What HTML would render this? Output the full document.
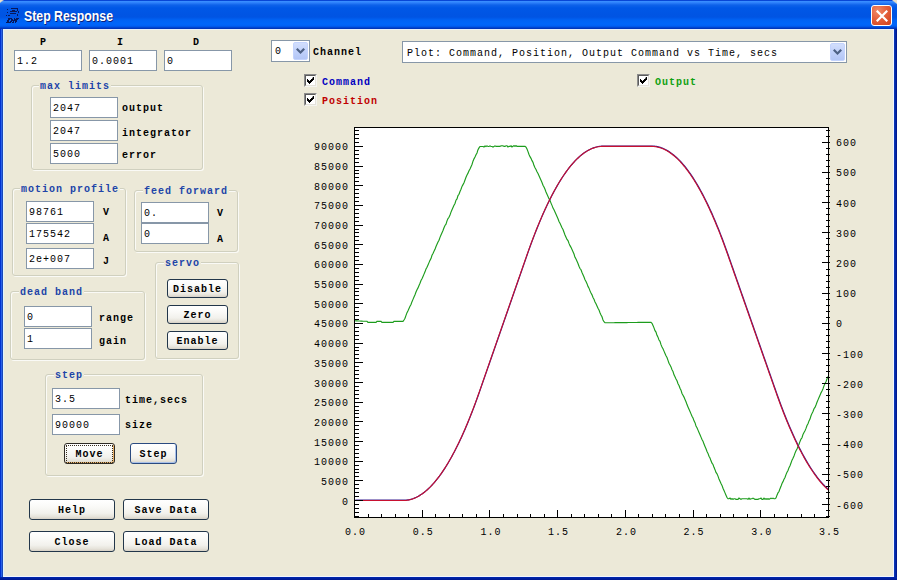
<!DOCTYPE html>
<html><head><meta charset="utf-8">
<style>
*{margin:0;padding:0;box-sizing:border-box}
html,body{width:897px;height:580px;overflow:hidden;background:#ECE9D8}
body{position:relative;font-family:"Liberation Mono",monospace;font-size:10px;letter-spacing:1px;color:#000}
.a{position:absolute}
#title{position:absolute;left:0;top:0;width:897px;height:29px;
 background:linear-gradient(to bottom,#0846D6 0px,#0846D6 1px,#3B8FFF 1px,#3489FF 2px,#2A7CF8 3px,#0E62EA 5px,#0057E6 8px,#0054E3 17px,#0062F4 20px,#0066FA 24px,#0060F4 26px,#0050E0 27px,#003CC4 28px,#0030B0 29px);}
#ttext{position:absolute;left:24px;top:8px;font-family:"Liberation Sans",sans-serif;font-weight:bold;font-size:14px;line-height:16px;letter-spacing:0;color:#fff;text-shadow:1px 1px 0 #0A1F7A;transform:scaleX(0.88);transform-origin:0 0;white-space:pre}
#lb{position:absolute;left:0;top:29px;width:3px;height:551px;background:linear-gradient(to right,#0032D0 0,#0032D0 1px,#2860E8 1px,#2860E8 2px,#1A48B8 2px,#1A48B8 3px)}
#rb{position:absolute;left:894px;top:29px;width:3px;height:551px;background:linear-gradient(to right,#0A34B4 0,#0A34B4 1px,#0028A8 1px,#0028A8 2px,#001890 2px,#001890 3px)}
#bb{position:absolute;left:0;top:577px;width:897px;height:3px;background:linear-gradient(to bottom,#0028B0,#001C98 2px,#001890 3px)}
#content{position:absolute;left:3px;top:29px;width:891px;height:548px;background:#ECE9D8;border-top:1px solid #E8F0F8;border-left:1px solid #E0F4FF;border-right:1px solid #F0F4FF;border-bottom:1px solid #F0F4FF}
.tb{position:absolute;background:#fff;border:1px solid #8797A8;height:21px;width:68px;padding-left:2px;line-height:21px;white-space:pre}
.lbl{position:absolute;font-weight:bold;white-space:pre;line-height:18px}
.grp{position:absolute;border:1px solid #D0D0BF;border-radius:3px;box-shadow:1px 1px 0 #FAFAF6, inset 1px 1px 0 #FAFAF6}
.gt{position:absolute;font-weight:bold;color:#2044A8;background:#ECE9D8;padding:0 1px;line-height:16px;white-space:pre}
.btn{position:absolute;border:1px solid #22364A;border-radius:3px;font-weight:bold;text-align:center;line-height:19px;white-space:pre;
 background:linear-gradient(to bottom,#FFFFFF 0%,#FBFBF9 30%,#F2F1EC 70%,#E6E3DA 88%,#D6D0C5 100%)}
.yl{position:absolute;left:299px;width:50px;text-align:right;line-height:14px}
.yr{position:absolute;left:836px;line-height:14px;white-space:pre}
.xl{position:absolute;top:526px;width:60px;text-align:center;line-height:14px}
.chart{position:absolute;left:0;top:0}
.cb{position:absolute;width:13px;height:13px;background:#fff;border-top:1px solid #8C8C8C;border-left:1px solid #8C8C8C;border-right:1px solid #F4F4F0;border-bottom:1px solid #F4F4F0;}
.cb:before{content:"";position:absolute;left:0;top:0;right:0;bottom:0;border-top:1px solid #5C5C5C;border-left:1px solid #5C5C5C;border-right:1px solid #E4E2DA;border-bottom:1px solid #E4E2DA}
.cb svg{position:absolute;left:2px;top:2px}
.combo{position:absolute;background:#fff;border:1px solid #8797A8;white-space:pre;line-height:24px;padding-left:4px}
.dd{position:absolute;top:1px;right:1px;width:15px;bottom:1px;border-radius:2px;border:1px solid #C3D3FD;
 background:linear-gradient(to bottom,#D2DEFC,#C1D1FA 50%,#B3C6F6)}
.dd svg{position:absolute;left:2px;top:5px}
</style></head><body>
<div id="title"></div>
<svg class="a" style="left:0;top:0" width="24" height="26"><g fill="#08185A"><rect x="11" y="8" width="7" height="1"/><rect x="7" y="9" width="1" height="1"/><rect x="17" y="9" width="1" height="1"/><rect x="12" y="10" width="3" height="1"/><rect x="17" y="10" width="1" height="1"/><rect x="10" y="11" width="7" height="1"/><rect x="18" y="11" width="1" height="1"/><rect x="7" y="12" width="1" height="1"/><rect x="18" y="12" width="1" height="1"/><rect x="10" y="13" width="6" height="1"/><rect x="17" y="14" width="1" height="1"/><rect x="6" y="15" width="1" height="1"/><rect x="8" y="15" width="2" height="1"/><rect x="17" y="15" width="1" height="1"/><rect x="8" y="18" width="4" height="1"/><rect x="14" y="18" width="1" height="1"/><rect x="16" y="18" width="3" height="1"/><rect x="8" y="19" width="2" height="1"/><rect x="11" y="19" width="2" height="1"/><rect x="14" y="19" width="2" height="1"/><rect x="16" y="19" width="2" height="1"/><rect x="7" y="20" width="2" height="1"/><rect x="11" y="20" width="2" height="1"/><rect x="13" y="20" width="4" height="1"/><rect x="7" y="21" width="2" height="1"/><rect x="10" y="21" width="2" height="1"/><rect x="13" y="21" width="1" height="1"/><rect x="15" y="21" width="2" height="1"/><rect x="6" y="22" width="5" height="1"/><rect x="12" y="22" width="2" height="1"/><rect x="15" y="22" width="1" height="1"/></g></svg>
<div id="ttext">Step Response</div>
<div class="a" style="left:871px;top:5px;width:21px;height:21px;border:1px solid #fff;border-radius:3px;background:radial-gradient(circle at 30% 25%,#F08A68 0%,#E4603C 45%,#D0401C 100%)">
 <svg class="a" style="left:4px;top:4px" width="12" height="12" viewBox="0 0 12 12"><path d="M1.5 1.5L10.5 10.5M10.5 1.5L1.5 10.5" stroke="#fff" stroke-width="2.2" stroke-linecap="square"/></svg>
</div>
<div class="a" style="left:892px;top:0;width:5px;height:4px;background:linear-gradient(to bottom left,#ECE0C8 40%,rgba(0,80,230,0) 60%)"></div>
<div class="a" style="left:0;top:0;width:4px;height:3px;background:linear-gradient(to bottom right,#ECE0C8 35%,rgba(0,80,230,0) 60%)"></div>
<div id="lb"></div><div id="rb"></div><div id="bb"></div>
<div id="content"></div>

<!-- PID -->
<div class="lbl" style="left:40px;top:34px">P</div>
<div class="lbl" style="left:117px;top:34px">I</div>
<div class="lbl" style="left:193px;top:34px">D</div>
<div class="tb" style="left:14px;top:50px">1.2</div>
<div class="tb" style="left:89px;top:50px">0.0001</div>
<div class="tb" style="left:164px;top:50px">0</div>

<!-- max limits -->
<div class="grp" style="left:31px;top:85px;width:172px;height:85px"></div>
<div class="gt" style="left:39px;top:79px">max limits</div>
<div class="tb" style="left:50px;top:97px">2047</div>
<div class="tb" style="left:50px;top:120px">2047</div>
<div class="tb" style="left:50px;top:143px">5000</div>
<div class="lbl" style="left:122px;top:100px">output</div>
<div class="lbl" style="left:122px;top:125px">integrator</div>
<div class="lbl" style="left:122px;top:147px">error</div>

<!-- motion profile -->
<div class="grp" style="left:12px;top:188px;width:114px;height:88px"></div>
<div class="gt" style="left:20px;top:182px">motion profile</div>
<div class="tb" style="left:26px;top:201px">98761</div>
<div class="tb" style="left:26px;top:223px">175542</div>
<div class="tb" style="left:26px;top:248px">2e+007</div>
<div class="lbl" style="left:103px;top:204px">V</div>
<div class="lbl" style="left:103px;top:230px">A</div>
<div class="lbl" style="left:103px;top:253px">J</div>

<!-- feed forward -->
<div class="grp" style="left:134px;top:190px;width:104px;height:62px"></div>
<div class="gt" style="left:143px;top:184px">feed forward</div>
<div class="tb" style="left:141px;top:202px">0.</div>
<div class="tb" style="left:141px;top:223px">0</div>
<div class="lbl" style="left:217px;top:205px">V</div>
<div class="lbl" style="left:217px;top:231px">A</div>

<!-- servo -->
<div class="grp" style="left:155px;top:262px;width:84px;height:97px"></div>
<div class="gt" style="left:164px;top:256px">servo</div>
<div class="btn" style="left:167px;top:279px;width:61px;height:19px">Disable</div>
<div class="btn" style="left:167px;top:305px;width:61px;height:19px">Zero</div>
<div class="btn" style="left:167px;top:331px;width:61px;height:19px">Enable</div>

<!-- dead band -->
<div class="grp" style="left:10px;top:291px;width:135px;height:69px"></div>
<div class="gt" style="left:19px;top:285px">dead band</div>
<div class="tb" style="left:24px;top:306px">0</div>
<div class="tb" style="left:24px;top:328px">1</div>
<div class="lbl" style="left:99px;top:310px">range</div>
<div class="lbl" style="left:99px;top:333px">gain</div>

<!-- step -->
<div class="grp" style="left:45px;top:374px;width:158px;height:102px"></div>
<div class="gt" style="left:54px;top:368px">step</div>
<div class="tb" style="left:52px;top:388px">3.5</div>
<div class="tb" style="left:52px;top:414px">90000</div>
<div class="lbl" style="left:125px;top:392px">time,secs</div>
<div class="lbl" style="left:125px;top:417px">size</div>
<div class="btn" style="left:64px;top:443px;width:51px;height:21px;line-height:21px;border-color:#2E2A24;box-shadow:inset -1px -1px 0 #E8B068">Move</div>
<div class="a" style="left:66px;top:445px;width:47px;height:18px;border:1px dotted #3A3020"></div>
<div class="btn" style="left:130px;top:443px;width:47px;height:21px;line-height:21px;border-color:#2A4A80;box-shadow:inset -1px -1px 0 #A8C0E8">Step</div>

<!-- bottom buttons -->
<div class="btn" style="left:29px;top:499px;width:86px;height:21px;line-height:21px">Help</div>
<div class="btn" style="left:123px;top:499px;width:86px;height:21px;line-height:21px">Save Data</div>
<div class="btn" style="left:29px;top:531px;width:86px;height:21px;line-height:21px">Close</div>
<div class="btn" style="left:123px;top:531px;width:86px;height:21px;line-height:21px">Load Data</div>

<!-- channel combo -->
<div class="combo" style="left:271px;top:40px;width:39px;height:22px;padding-left:3px;line-height:22px">0<div class="dd"><svg width="9" height="7" viewBox="0 0 9 7"><path d="M0 1.6L1.6 0L4.5 2.9L7.4 0L9 1.6L4.5 6.1Z" fill="#4D6185"/></svg></div></div>
<div class="lbl" style="left:313px;top:44px">Channel</div>

<div class="combo" style="left:402px;top:41px;width:445px;height:22px">Plot: Command, Position, Output Command vs Time, secs<div class="dd"><svg width="9" height="7" viewBox="0 0 9 7"><path d="M0 1.6L1.6 0L4.5 2.9L7.4 0L9 1.6L4.5 6.1Z" fill="#4D6185"/></svg></div></div>

<!-- checkboxes -->
<div class="cb" style="left:304px;top:74px"><svg width="7" height="7" viewBox="0 0 7 7"><path fill="#000" d="M6 0h1v3h-1v1h-1v1h-1v1h-1v1h-1v-1h-1v-1h-1v-3h1v1h1v1h1v-1h1v-1h1z"/></svg></div>
<div class="lbl" style="left:322px;top:74px;color:#0000C0">Command</div>
<div class="cb" style="left:304px;top:93px"><svg width="7" height="7" viewBox="0 0 7 7"><path fill="#000" d="M6 0h1v3h-1v1h-1v1h-1v1h-1v1h-1v-1h-1v-1h-1v-3h1v1h1v1h1v-1h1v-1h1z"/></svg></div>
<div class="lbl" style="left:322px;top:93px;color:#C00000">Position</div>
<div class="cb" style="left:637px;top:74px"><svg width="7" height="7" viewBox="0 0 7 7"><path fill="#000" d="M6 0h1v3h-1v1h-1v1h-1v1h-1v1h-1v-1h-1v-1h-1v-3h1v1h1v1h1v-1h1v-1h1z"/></svg></div>
<div class="lbl" style="left:655px;top:74px;color:#10A010">Output</div>

<svg class="chart" width="897" height="580"><rect x="354" y="127" width="475" height="391" fill="#fff"/><polyline points="355.0,320.80 356.0,320.85 357.0,320.90 358.0,320.95 359.0,321.00 360.0,321.05 361.0,321.10 362.0,321.15 363.0,321.20 364.0,321.22 365.0,321.24 366.0,321.27 367.0,321.29 368.0,322.40 369.0,322.40 370.0,322.40 371.0,322.40 372.0,322.40 373.0,322.40 374.0,322.40 375.0,322.40 376.0,322.40 377.0,321.30 378.0,321.30 379.0,321.30 380.0,321.30 381.0,321.30 382.0,322.40 383.0,322.40 384.0,322.40 385.0,322.40 386.0,322.40 387.0,322.40 388.0,322.40 389.0,322.40 390.0,322.40 391.0,322.40 392.0,322.40 393.0,322.40 394.0,321.31 395.0,321.32 396.0,321.33 397.0,321.34 398.0,321.35 399.0,321.36 400.0,321.37 401.0,321.38 402.0,321.39 403.0,321.40 404.0,320.02 405.0,318.23 406.0,315.43 407.0,312.64 408.0,310.84 409.0,308.55 410.0,306.25 411.0,304.46 412.0,301.66 413.0,299.37 414.0,297.07 415.0,294.77 416.0,291.98 417.0,289.68 418.0,287.89 419.0,285.59 420.0,283.30 421.0,280.50 422.0,278.71 423.0,276.41 424.0,274.12 425.0,271.82 426.0,269.03 427.0,267.23 428.0,264.94 429.0,262.64 430.0,260.35 431.0,258.55 432.0,255.26 433.0,253.46 434.0,251.16 435.0,249.37 436.0,246.57 437.0,244.28 438.0,241.98 439.0,240.19 440.0,237.39 441.0,235.10 442.0,232.80 443.0,230.51 444.0,227.71 445.0,225.42 446.0,224.12 447.0,220.83 448.0,218.53 449.0,217.24 450.0,214.94 451.0,212.14 452.0,209.85 453.0,207.55 454.0,205.26 455.0,203.46 456.0,200.17 457.0,198.87 458.0,195.58 459.0,194.28 460.0,191.49 461.0,189.19 462.0,186.40 463.0,184.60 464.0,182.81 465.0,180.01 466.0,177.22 467.0,174.92 468.0,173.13 469.0,170.83 470.0,169.03 471.0,166.74 472.0,164.44 473.0,161.15 474.0,158.85 475.0,157.06 476.0,154.76 477.0,152.97 478.0,149.67 479.0,147.88 480.0,146.50 481.0,146.49 482.0,146.49 483.0,146.49 484.0,147.08 485.0,145.88 486.0,146.47 487.0,145.87 488.0,146.46 489.0,146.46 490.0,145.85 491.0,146.45 492.0,146.45 493.0,147.04 494.0,146.44 495.0,145.83 496.0,146.43 497.0,146.42 498.0,146.42 499.0,146.42 500.0,146.41 501.0,145.81 502.0,145.80 503.0,145.80 504.0,146.39 505.0,146.39 506.0,145.79 507.0,145.78 508.0,146.98 509.0,146.37 510.0,146.37 511.0,145.76 512.0,146.96 513.0,146.35 514.0,145.75 515.0,146.35 516.0,145.74 517.0,146.34 518.0,146.33 519.0,146.33 520.0,146.32 521.0,146.32 522.0,146.32 523.0,146.31 524.0,146.31 525.0,146.30 526.0,147.19 527.0,148.93 528.0,151.67 529.0,154.41 530.0,156.64 531.0,158.38 532.0,160.62 533.0,162.35 534.0,165.59 535.0,167.83 536.0,169.56 537.0,171.80 538.0,173.54 539.0,175.78 540.0,178.01 541.0,180.25 542.0,182.49 543.0,185.22 544.0,186.96 545.0,189.20 546.0,191.93 547.0,194.17 548.0,196.41 549.0,198.65 550.0,200.38 551.0,203.12 552.0,205.36 553.0,208.09 554.0,209.83 555.0,212.07 556.0,214.31 557.0,216.54 558.0,218.78 559.0,221.52 560.0,223.25 561.0,225.49 562.0,227.73 563.0,229.46 564.0,232.20 565.0,234.94 566.0,237.18 567.0,239.41 568.0,240.65 569.0,243.39 570.0,245.62 571.0,247.36 572.0,249.60 573.0,251.83 574.0,254.07 575.0,257.31 576.0,259.05 577.0,261.28 578.0,263.52 579.0,266.26 580.0,268.49 581.0,269.73 582.0,272.47 583.0,274.70 584.0,276.94 585.0,279.68 586.0,281.42 587.0,283.65 588.0,286.39 589.0,288.13 590.0,290.86 591.0,293.10 592.0,294.84 593.0,297.57 594.0,299.31 595.0,302.05 596.0,303.79 597.0,306.02 598.0,308.26 599.0,310.00 600.0,312.73 601.0,314.97 602.0,316.71 603.0,319.94 604.0,321.68 605.0,322.79 606.0,322.78 607.0,322.77 608.0,322.76 609.0,322.75 610.0,322.74 611.0,322.73 612.0,322.72 613.0,322.71 614.0,322.70 615.0,322.69 616.0,322.68 617.0,322.67 618.0,322.66 619.0,322.65 620.0,322.64 621.0,322.62 622.0,322.61 623.0,322.60 624.0,322.59 625.0,322.58 626.0,322.57 627.0,322.56 628.0,322.55 629.0,322.54 630.0,322.53 631.0,322.52 632.0,322.51 633.0,322.50 634.0,322.49 635.0,322.48 636.0,322.47 637.0,322.45 638.0,322.44 639.0,322.43 640.0,322.42 641.0,322.41 642.0,322.40 643.0,322.39 644.0,322.38 645.0,322.37 646.0,322.36 647.0,322.35 648.0,322.34 649.0,322.33 650.0,322.32 651.0,322.31 652.0,323.23 653.0,325.55 654.0,327.88 655.0,330.70 656.0,332.03 657.0,335.35 658.0,337.17 659.0,340.00 660.0,341.32 661.0,344.65 662.0,346.97 663.0,348.79 664.0,351.12 665.0,353.44 666.0,355.77 667.0,357.59 668.0,360.42 669.0,363.24 670.0,365.06 671.0,366.89 672.0,369.71 673.0,371.54 674.0,374.86 675.0,376.68 676.0,379.01 677.0,380.83 678.0,383.66 679.0,385.48 680.0,388.30 681.0,390.13 682.0,393.45 683.0,395.28 684.0,397.10 685.0,399.43 686.0,401.75 687.0,404.57 688.0,406.90 689.0,409.22 690.0,411.55 691.0,413.87 692.0,416.19 693.0,418.02 694.0,420.84 695.0,422.67 696.0,425.99 697.0,427.81 698.0,430.14 699.0,432.46 700.0,434.79 701.0,437.11 702.0,439.44 703.0,441.26 704.0,444.08 705.0,446.41 706.0,448.73 707.0,451.56 708.0,453.38 709.0,456.20 710.0,458.03 711.0,460.85 712.0,463.18 713.0,464.50 714.0,467.32 715.0,469.65 716.0,472.47 717.0,473.80 718.0,476.12 719.0,478.95 720.0,481.27 721.0,483.59 722.0,485.42 723.0,488.24 724.0,490.57 725.0,492.89 726.0,495.21 727.0,497.54 728.0,498.70 729.0,498.70 730.0,498.10 731.0,499.30 732.0,498.70 733.0,499.30 734.0,498.70 735.0,498.70 736.0,499.30 737.0,499.30 738.0,499.30 739.0,498.10 740.0,498.70 741.0,499.30 742.0,498.70 743.0,498.70 744.0,498.70 745.0,498.70 746.0,498.70 747.0,498.70 748.0,499.30 749.0,498.10 750.0,499.30 751.0,498.70 752.0,498.70 753.0,498.10 754.0,498.70 755.0,499.30 756.0,499.30 757.0,499.30 758.0,499.30 759.0,498.70 760.0,498.70 761.0,498.10 762.0,499.30 763.0,499.30 764.0,498.10 765.0,499.30 766.0,498.70 767.0,499.30 768.0,498.70 769.0,499.30 770.0,498.70 771.0,498.10 772.0,498.70 773.0,498.10 774.0,498.70 775.0,498.70 776.0,498.00 777.0,495.16 778.0,492.83 779.0,491.49 780.0,488.65 781.0,486.32 782.0,483.48 783.0,481.64 784.0,479.31 785.0,477.47 786.0,474.63 787.0,472.30 788.0,470.46 789.0,467.62 790.0,465.79 791.0,462.95 792.0,460.11 793.0,458.28 794.0,455.94 795.0,453.11 796.0,450.77 797.0,448.93 798.0,446.60 799.0,444.26 800.0,441.42 801.0,439.09 802.0,437.75 803.0,434.41 804.0,432.58 805.0,430.74 806.0,428.40 807.0,425.57 808.0,423.73 809.0,420.89 810.0,419.06 811.0,415.72 812.0,413.38 813.0,411.55 814.0,408.71 815.0,407.37 816.0,405.04 817.0,402.20 818.0,399.87 819.0,397.53 820.0,395.19 821.0,392.86 822.0,391.02 823.0,388.68 824.0,385.85 825.0,383.51 826.0,381.67 827.0,378.84 828.0,376.50" fill="none" stroke="#1c9c1c" stroke-width="1.15"/><polyline points="355.0,500.50 356.0,500.50 357.0,500.50 358.0,500.50 359.0,500.50 360.0,500.50 361.0,500.50 362.0,500.50 363.0,500.50 364.0,500.50 365.0,500.50 366.0,500.50 367.0,500.50 368.0,500.50 369.0,500.50 370.0,500.50 371.0,500.50 372.0,500.50 373.0,500.50 374.0,500.50 375.0,500.50 376.0,500.50 377.0,500.50 378.0,500.50 379.0,500.50 380.0,500.50 381.0,500.50 382.0,500.50 383.0,500.50 384.0,500.50 385.0,500.50 386.0,500.50 387.0,500.50 388.0,500.50 389.0,500.50 390.0,500.50 391.0,500.50 392.0,500.50 393.0,500.50 394.0,500.50 395.0,500.50 396.0,500.50 397.0,500.50 398.0,500.50 399.0,500.50 400.0,500.50 401.0,500.50 402.0,500.50 403.0,500.50 404.0,500.49 405.0,500.45 406.0,500.37 407.0,500.26 408.0,500.10 409.0,499.91 410.0,499.68 411.0,499.41 412.0,499.11 413.0,498.76 414.0,498.38 415.0,497.96 416.0,497.51 417.0,497.01 418.0,496.48 419.0,495.91 420.0,495.30 421.0,494.66 422.0,493.98 423.0,493.25 424.0,492.50 425.0,491.70 426.0,490.87 427.0,490.00 428.0,489.09 429.0,488.14 430.0,487.16 431.0,486.13 432.0,485.07 433.0,483.98 434.0,482.84 435.0,481.67 436.0,480.46 437.0,479.21 438.0,477.92 439.0,476.60 440.0,475.24 441.0,473.84 442.0,472.40 443.0,470.93 444.0,469.41 445.0,467.86 446.0,466.27 447.0,464.65 448.0,462.99 449.0,461.28 450.0,459.55 451.0,457.77 452.0,455.95 453.0,454.10 454.0,452.21 455.0,450.29 456.0,448.32 457.0,446.32 458.0,444.28 459.0,442.20 460.0,440.08 461.0,437.93 462.0,435.74 463.0,433.51 464.0,431.24 465.0,428.94 466.0,426.59 467.0,424.21 468.0,421.80 469.0,419.34 470.0,416.85 471.0,414.32 472.0,411.75 473.0,409.14 474.0,406.50 475.0,403.82 476.0,401.10 477.0,398.34 478.0,395.54 479.0,392.71 480.0,389.84 481.0,386.97 482.0,384.10 483.0,381.22 484.0,378.35 485.0,375.47 486.0,372.60 487.0,369.72 488.0,366.85 489.0,363.98 490.0,361.10 491.0,358.23 492.0,355.35 493.0,352.48 494.0,349.61 495.0,346.73 496.0,343.86 497.0,340.98 498.0,338.11 499.0,335.23 500.0,332.36 501.0,329.49 502.0,326.61 503.0,323.74 504.0,320.86 505.0,317.99 506.0,315.11 507.0,312.24 508.0,309.37 509.0,306.49 510.0,303.62 511.0,300.74 512.0,297.87 513.0,295.00 514.0,292.12 515.0,289.25 516.0,286.37 517.0,283.50 518.0,280.62 519.0,277.75 520.0,274.88 521.0,272.00 522.0,269.13 523.0,266.25 524.0,263.38 525.0,260.51 526.0,257.63 527.0,254.76 528.0,251.92 529.0,249.12 530.0,246.35 531.0,243.63 532.0,240.94 533.0,238.28 534.0,235.67 535.0,233.09 536.0,230.56 537.0,228.05 538.0,225.59 539.0,223.17 540.0,220.78 541.0,218.43 542.0,216.12 543.0,213.84 544.0,211.61 545.0,209.41 546.0,207.25 547.0,205.12 548.0,203.04 549.0,200.99 550.0,198.98 551.0,197.00 552.0,195.07 553.0,193.17 554.0,191.31 555.0,189.49 556.0,187.71 557.0,185.96 558.0,184.25 559.0,182.58 560.0,180.95 561.0,179.35 562.0,177.79 563.0,176.27 564.0,174.79 565.0,173.35 566.0,171.94 567.0,170.57 568.0,169.24 569.0,167.95 570.0,166.69 571.0,165.47 572.0,164.29 573.0,163.15 574.0,162.04 575.0,160.98 576.0,159.95 577.0,158.95 578.0,158.00 579.0,157.08 580.0,156.20 581.0,155.36 582.0,154.56 583.0,153.79 584.0,153.07 585.0,152.38 586.0,151.72 587.0,151.11 588.0,150.53 589.0,149.99 590.0,149.49 591.0,149.03 592.0,148.60 593.0,148.21 594.0,147.86 595.0,147.55 596.0,147.27 597.0,147.03 598.0,146.83 599.0,146.67 600.0,146.55 601.0,146.46 602.0,146.41 603.0,146.40 604.0,146.40 605.0,146.40 606.0,146.40 607.0,146.40 608.0,146.40 609.0,146.40 610.0,146.40 611.0,146.40 612.0,146.40 613.0,146.40 614.0,146.40 615.0,146.40 616.0,146.40 617.0,146.40 618.0,146.40 619.0,146.40 620.0,146.40 621.0,146.40 622.0,146.40 623.0,146.40 624.0,146.40 625.0,146.40 626.0,146.40 627.0,146.40 628.0,146.40 629.0,146.40 630.0,146.40 631.0,146.40 632.0,146.40 633.0,146.40 634.0,146.40 635.0,146.40 636.0,146.40 637.0,146.40 638.0,146.40 639.0,146.40 640.0,146.40 641.0,146.40 642.0,146.40 643.0,146.40 644.0,146.40 645.0,146.40 646.0,146.40 647.0,146.40 648.0,146.40 649.0,146.40 650.0,146.40 651.0,146.40 652.0,146.40 653.0,146.44 654.0,146.51 655.0,146.62 656.0,146.76 657.0,146.95 658.0,147.17 659.0,147.42 660.0,147.72 661.0,148.05 662.0,148.42 663.0,148.83 664.0,149.28 665.0,149.76 666.0,150.28 667.0,150.84 668.0,151.43 669.0,152.06 670.0,152.73 671.0,153.44 672.0,154.19 673.0,154.97 674.0,155.79 675.0,156.64 676.0,157.54 677.0,158.47 678.0,159.44 679.0,160.44 680.0,161.49 681.0,162.57 682.0,163.69 683.0,164.85 684.0,166.04 685.0,167.27 686.0,168.54 687.0,169.84 688.0,171.19 689.0,172.57 690.0,173.99 691.0,175.44 692.0,176.93 693.0,178.46 694.0,180.03 695.0,181.64 696.0,183.28 697.0,184.96 698.0,186.68 699.0,188.43 700.0,190.22 701.0,192.05 702.0,193.92 703.0,195.82 704.0,197.77 705.0,199.75 706.0,201.76 707.0,203.82 708.0,205.91 709.0,208.04 710.0,210.20 711.0,212.41 712.0,214.65 713.0,216.93 714.0,219.24 715.0,221.60 716.0,223.99 717.0,226.42 718.0,228.88 719.0,231.38 720.0,233.92 721.0,236.50 722.0,239.12 723.0,241.77 724.0,244.46 725.0,247.19 726.0,249.95 727.0,252.76 728.0,255.60 729.0,258.45 730.0,261.30 731.0,264.15 732.0,267.00 733.0,269.85 734.0,272.70 735.0,275.55 736.0,278.40 737.0,281.25 738.0,284.11 739.0,286.96 740.0,289.81 741.0,292.66 742.0,295.51 743.0,298.36 744.0,301.21 745.0,304.06 746.0,306.91 747.0,309.76 748.0,312.62 749.0,315.47 750.0,318.32 751.0,321.17 752.0,324.02 753.0,326.87 754.0,329.72 755.0,332.57 756.0,335.42 757.0,338.28 758.0,341.13 759.0,343.98 760.0,346.83 761.0,349.68 762.0,352.53 763.0,355.38 764.0,358.23 765.0,361.08 766.0,363.93 767.0,366.79 768.0,369.64 769.0,372.49 770.0,375.34 771.0,378.19 772.0,381.04 773.0,383.89 774.0,386.74 775.0,389.59 776.0,392.44 777.0,395.27 778.0,398.06 779.0,400.81 780.0,403.52 781.0,406.19 782.0,408.83 783.0,411.43 784.0,414.00 785.0,416.52 786.0,419.01 787.0,421.46 788.0,423.87 789.0,426.25 790.0,428.59 791.0,430.89 792.0,433.15 793.0,435.38 794.0,437.57 795.0,439.72 796.0,441.83 797.0,443.91 798.0,445.95 799.0,447.95 800.0,449.91 801.0,451.84 802.0,453.73 803.0,455.58 804.0,457.40 805.0,459.17 806.0,460.91 807.0,462.62 808.0,464.28 809.0,465.91 810.0,467.50 811.0,469.05 812.0,470.57 813.0,472.05 814.0,473.49 815.0,474.89 816.0,476.25 817.0,477.58 818.0,478.87 819.0,480.13 820.0,481.34 821.0,482.52 822.0,483.66 823.0,484.77 824.0,485.83 825.0,486.86 826.0,487.85 827.0,488.81 828.0,489.72" fill="none" stroke="#3a2090" stroke-width="1.2" transform="translate(0.3,-0.3)"/><polyline points="355.0,500.50 356.0,500.50 357.0,500.50 358.0,500.50 359.0,500.50 360.0,500.50 361.0,500.50 362.0,500.50 363.0,500.50 364.0,500.50 365.0,500.50 366.0,500.50 367.0,500.50 368.0,500.50 369.0,500.50 370.0,500.50 371.0,500.50 372.0,500.50 373.0,500.50 374.0,500.50 375.0,500.50 376.0,500.50 377.0,500.50 378.0,500.50 379.0,500.50 380.0,500.50 381.0,500.50 382.0,500.50 383.0,500.50 384.0,500.50 385.0,500.50 386.0,500.50 387.0,500.50 388.0,500.50 389.0,500.50 390.0,500.50 391.0,500.50 392.0,500.50 393.0,500.50 394.0,500.50 395.0,500.50 396.0,500.50 397.0,500.50 398.0,500.50 399.0,500.50 400.0,500.50 401.0,500.50 402.0,500.50 403.0,500.50 404.0,500.49 405.0,500.45 406.0,500.37 407.0,500.26 408.0,500.10 409.0,499.91 410.0,499.68 411.0,499.41 412.0,499.11 413.0,498.76 414.0,498.38 415.0,497.96 416.0,497.51 417.0,497.01 418.0,496.48 419.0,495.91 420.0,495.30 421.0,494.66 422.0,493.98 423.0,493.25 424.0,492.50 425.0,491.70 426.0,490.87 427.0,490.00 428.0,489.09 429.0,488.14 430.0,487.16 431.0,486.13 432.0,485.07 433.0,483.98 434.0,482.84 435.0,481.67 436.0,480.46 437.0,479.21 438.0,477.92 439.0,476.60 440.0,475.24 441.0,473.84 442.0,472.40 443.0,470.93 444.0,469.41 445.0,467.86 446.0,466.27 447.0,464.65 448.0,462.99 449.0,461.28 450.0,459.55 451.0,457.77 452.0,455.95 453.0,454.10 454.0,452.21 455.0,450.29 456.0,448.32 457.0,446.32 458.0,444.28 459.0,442.20 460.0,440.08 461.0,437.93 462.0,435.74 463.0,433.51 464.0,431.24 465.0,428.94 466.0,426.59 467.0,424.21 468.0,421.80 469.0,419.34 470.0,416.85 471.0,414.32 472.0,411.75 473.0,409.14 474.0,406.50 475.0,403.82 476.0,401.10 477.0,398.34 478.0,395.54 479.0,392.71 480.0,389.84 481.0,386.97 482.0,384.10 483.0,381.22 484.0,378.35 485.0,375.47 486.0,372.60 487.0,369.72 488.0,366.85 489.0,363.98 490.0,361.10 491.0,358.23 492.0,355.35 493.0,352.48 494.0,349.61 495.0,346.73 496.0,343.86 497.0,340.98 498.0,338.11 499.0,335.23 500.0,332.36 501.0,329.49 502.0,326.61 503.0,323.74 504.0,320.86 505.0,317.99 506.0,315.11 507.0,312.24 508.0,309.37 509.0,306.49 510.0,303.62 511.0,300.74 512.0,297.87 513.0,295.00 514.0,292.12 515.0,289.25 516.0,286.37 517.0,283.50 518.0,280.62 519.0,277.75 520.0,274.88 521.0,272.00 522.0,269.13 523.0,266.25 524.0,263.38 525.0,260.51 526.0,257.63 527.0,254.76 528.0,251.92 529.0,249.12 530.0,246.35 531.0,243.63 532.0,240.94 533.0,238.28 534.0,235.67 535.0,233.09 536.0,230.56 537.0,228.05 538.0,225.59 539.0,223.17 540.0,220.78 541.0,218.43 542.0,216.12 543.0,213.84 544.0,211.61 545.0,209.41 546.0,207.25 547.0,205.12 548.0,203.04 549.0,200.99 550.0,198.98 551.0,197.00 552.0,195.07 553.0,193.17 554.0,191.31 555.0,189.49 556.0,187.71 557.0,185.96 558.0,184.25 559.0,182.58 560.0,180.95 561.0,179.35 562.0,177.79 563.0,176.27 564.0,174.79 565.0,173.35 566.0,171.94 567.0,170.57 568.0,169.24 569.0,167.95 570.0,166.69 571.0,165.47 572.0,164.29 573.0,163.15 574.0,162.04 575.0,160.98 576.0,159.95 577.0,158.95 578.0,158.00 579.0,157.08 580.0,156.20 581.0,155.36 582.0,154.56 583.0,153.79 584.0,153.07 585.0,152.38 586.0,151.72 587.0,151.11 588.0,150.53 589.0,149.99 590.0,149.49 591.0,149.03 592.0,148.60 593.0,148.21 594.0,147.86 595.0,147.55 596.0,147.27 597.0,147.03 598.0,146.83 599.0,146.67 600.0,146.55 601.0,146.46 602.0,146.41 603.0,146.40 604.0,146.40 605.0,146.40 606.0,146.40 607.0,146.40 608.0,146.40 609.0,146.40 610.0,146.40 611.0,146.40 612.0,146.40 613.0,146.40 614.0,146.40 615.0,146.40 616.0,146.40 617.0,146.40 618.0,146.40 619.0,146.40 620.0,146.40 621.0,146.40 622.0,146.40 623.0,146.40 624.0,146.40 625.0,146.40 626.0,146.40 627.0,146.40 628.0,146.40 629.0,146.40 630.0,146.40 631.0,146.40 632.0,146.40 633.0,146.40 634.0,146.40 635.0,146.40 636.0,146.40 637.0,146.40 638.0,146.40 639.0,146.40 640.0,146.40 641.0,146.40 642.0,146.40 643.0,146.40 644.0,146.40 645.0,146.40 646.0,146.40 647.0,146.40 648.0,146.40 649.0,146.40 650.0,146.40 651.0,146.40 652.0,146.40 653.0,146.44 654.0,146.51 655.0,146.62 656.0,146.76 657.0,146.95 658.0,147.17 659.0,147.42 660.0,147.72 661.0,148.05 662.0,148.42 663.0,148.83 664.0,149.28 665.0,149.76 666.0,150.28 667.0,150.84 668.0,151.43 669.0,152.06 670.0,152.73 671.0,153.44 672.0,154.19 673.0,154.97 674.0,155.79 675.0,156.64 676.0,157.54 677.0,158.47 678.0,159.44 679.0,160.44 680.0,161.49 681.0,162.57 682.0,163.69 683.0,164.85 684.0,166.04 685.0,167.27 686.0,168.54 687.0,169.84 688.0,171.19 689.0,172.57 690.0,173.99 691.0,175.44 692.0,176.93 693.0,178.46 694.0,180.03 695.0,181.64 696.0,183.28 697.0,184.96 698.0,186.68 699.0,188.43 700.0,190.22 701.0,192.05 702.0,193.92 703.0,195.82 704.0,197.77 705.0,199.75 706.0,201.76 707.0,203.82 708.0,205.91 709.0,208.04 710.0,210.20 711.0,212.41 712.0,214.65 713.0,216.93 714.0,219.24 715.0,221.60 716.0,223.99 717.0,226.42 718.0,228.88 719.0,231.38 720.0,233.92 721.0,236.50 722.0,239.12 723.0,241.77 724.0,244.46 725.0,247.19 726.0,249.95 727.0,252.76 728.0,255.60 729.0,258.45 730.0,261.30 731.0,264.15 732.0,267.00 733.0,269.85 734.0,272.70 735.0,275.55 736.0,278.40 737.0,281.25 738.0,284.11 739.0,286.96 740.0,289.81 741.0,292.66 742.0,295.51 743.0,298.36 744.0,301.21 745.0,304.06 746.0,306.91 747.0,309.76 748.0,312.62 749.0,315.47 750.0,318.32 751.0,321.17 752.0,324.02 753.0,326.87 754.0,329.72 755.0,332.57 756.0,335.42 757.0,338.28 758.0,341.13 759.0,343.98 760.0,346.83 761.0,349.68 762.0,352.53 763.0,355.38 764.0,358.23 765.0,361.08 766.0,363.93 767.0,366.79 768.0,369.64 769.0,372.49 770.0,375.34 771.0,378.19 772.0,381.04 773.0,383.89 774.0,386.74 775.0,389.59 776.0,392.44 777.0,395.27 778.0,398.06 779.0,400.81 780.0,403.52 781.0,406.19 782.0,408.83 783.0,411.43 784.0,414.00 785.0,416.52 786.0,419.01 787.0,421.46 788.0,423.87 789.0,426.25 790.0,428.59 791.0,430.89 792.0,433.15 793.0,435.38 794.0,437.57 795.0,439.72 796.0,441.83 797.0,443.91 798.0,445.95 799.0,447.95 800.0,449.91 801.0,451.84 802.0,453.73 803.0,455.58 804.0,457.40 805.0,459.17 806.0,460.91 807.0,462.62 808.0,464.28 809.0,465.91 810.0,467.50 811.0,469.05 812.0,470.57 813.0,472.05 814.0,473.49 815.0,474.89 816.0,476.25 817.0,477.58 818.0,478.87 819.0,480.13 820.0,481.34 821.0,482.52 822.0,483.66 823.0,484.77 824.0,485.83 825.0,486.86 826.0,487.85 827.0,488.81 828.0,489.72" fill="none" stroke="#c81030" stroke-width="1.1"/><rect x="354" y="127" width="475" height="1" fill="#000"/><rect x="354" y="517" width="475" height="1" fill="#000"/><rect x="354" y="127" width="1" height="391" fill="#000"/><rect x="828" y="127" width="1" height="391" fill="#000"/><rect x="354" y="516" width="5" height="1" fill="#000"/><rect x="354" y="512" width="5" height="1" fill="#000"/><rect x="354" y="508" width="5" height="1" fill="#000"/><rect x="354" y="504" width="5" height="1" fill="#000"/><rect x="354" y="500" width="9" height="1" fill="#000"/><rect x="354" y="496" width="5" height="1" fill="#000"/><rect x="354" y="492" width="5" height="1" fill="#000"/><rect x="354" y="488" width="5" height="1" fill="#000"/><rect x="354" y="484" width="5" height="1" fill="#000"/><rect x="354" y="480" width="9" height="1" fill="#000"/><rect x="354" y="476" width="5" height="1" fill="#000"/><rect x="354" y="472" width="5" height="1" fill="#000"/><rect x="354" y="469" width="5" height="1" fill="#000"/><rect x="354" y="465" width="5" height="1" fill="#000"/><rect x="354" y="461" width="9" height="1" fill="#000"/><rect x="354" y="457" width="5" height="1" fill="#000"/><rect x="354" y="453" width="5" height="1" fill="#000"/><rect x="354" y="449" width="5" height="1" fill="#000"/><rect x="354" y="445" width="5" height="1" fill="#000"/><rect x="354" y="441" width="9" height="1" fill="#000"/><rect x="354" y="437" width="5" height="1" fill="#000"/><rect x="354" y="433" width="5" height="1" fill="#000"/><rect x="354" y="429" width="5" height="1" fill="#000"/><rect x="354" y="425" width="5" height="1" fill="#000"/><rect x="354" y="421" width="9" height="1" fill="#000"/><rect x="354" y="417" width="5" height="1" fill="#000"/><rect x="354" y="413" width="5" height="1" fill="#000"/><rect x="354" y="410" width="5" height="1" fill="#000"/><rect x="354" y="406" width="5" height="1" fill="#000"/><rect x="354" y="402" width="9" height="1" fill="#000"/><rect x="354" y="398" width="5" height="1" fill="#000"/><rect x="354" y="394" width="5" height="1" fill="#000"/><rect x="354" y="390" width="5" height="1" fill="#000"/><rect x="354" y="386" width="5" height="1" fill="#000"/><rect x="354" y="382" width="9" height="1" fill="#000"/><rect x="354" y="378" width="5" height="1" fill="#000"/><rect x="354" y="374" width="5" height="1" fill="#000"/><rect x="354" y="370" width="5" height="1" fill="#000"/><rect x="354" y="366" width="5" height="1" fill="#000"/><rect x="354" y="362" width="9" height="1" fill="#000"/><rect x="354" y="358" width="5" height="1" fill="#000"/><rect x="354" y="354" width="5" height="1" fill="#000"/><rect x="354" y="350" width="5" height="1" fill="#000"/><rect x="354" y="347" width="5" height="1" fill="#000"/><rect x="354" y="343" width="9" height="1" fill="#000"/><rect x="354" y="339" width="5" height="1" fill="#000"/><rect x="354" y="335" width="5" height="1" fill="#000"/><rect x="354" y="331" width="5" height="1" fill="#000"/><rect x="354" y="327" width="5" height="1" fill="#000"/><rect x="354" y="323" width="9" height="1" fill="#000"/><rect x="354" y="319" width="5" height="1" fill="#000"/><rect x="354" y="315" width="5" height="1" fill="#000"/><rect x="354" y="311" width="5" height="1" fill="#000"/><rect x="354" y="307" width="5" height="1" fill="#000"/><rect x="354" y="303" width="9" height="1" fill="#000"/><rect x="354" y="299" width="5" height="1" fill="#000"/><rect x="354" y="295" width="5" height="1" fill="#000"/><rect x="354" y="291" width="5" height="1" fill="#000"/><rect x="354" y="288" width="5" height="1" fill="#000"/><rect x="354" y="284" width="9" height="1" fill="#000"/><rect x="354" y="280" width="5" height="1" fill="#000"/><rect x="354" y="276" width="5" height="1" fill="#000"/><rect x="354" y="272" width="5" height="1" fill="#000"/><rect x="354" y="268" width="5" height="1" fill="#000"/><rect x="354" y="264" width="9" height="1" fill="#000"/><rect x="354" y="260" width="5" height="1" fill="#000"/><rect x="354" y="256" width="5" height="1" fill="#000"/><rect x="354" y="252" width="5" height="1" fill="#000"/><rect x="354" y="248" width="5" height="1" fill="#000"/><rect x="354" y="244" width="9" height="1" fill="#000"/><rect x="354" y="240" width="5" height="1" fill="#000"/><rect x="354" y="236" width="5" height="1" fill="#000"/><rect x="354" y="232" width="5" height="1" fill="#000"/><rect x="354" y="229" width="5" height="1" fill="#000"/><rect x="354" y="225" width="9" height="1" fill="#000"/><rect x="354" y="221" width="5" height="1" fill="#000"/><rect x="354" y="217" width="5" height="1" fill="#000"/><rect x="354" y="213" width="5" height="1" fill="#000"/><rect x="354" y="209" width="5" height="1" fill="#000"/><rect x="354" y="205" width="9" height="1" fill="#000"/><rect x="354" y="201" width="5" height="1" fill="#000"/><rect x="354" y="197" width="5" height="1" fill="#000"/><rect x="354" y="193" width="5" height="1" fill="#000"/><rect x="354" y="189" width="5" height="1" fill="#000"/><rect x="354" y="185" width="9" height="1" fill="#000"/><rect x="354" y="181" width="5" height="1" fill="#000"/><rect x="354" y="177" width="5" height="1" fill="#000"/><rect x="354" y="173" width="5" height="1" fill="#000"/><rect x="354" y="170" width="5" height="1" fill="#000"/><rect x="354" y="166" width="9" height="1" fill="#000"/><rect x="354" y="162" width="5" height="1" fill="#000"/><rect x="354" y="158" width="5" height="1" fill="#000"/><rect x="354" y="154" width="5" height="1" fill="#000"/><rect x="354" y="150" width="5" height="1" fill="#000"/><rect x="354" y="146" width="9" height="1" fill="#000"/><rect x="354" y="142" width="5" height="1" fill="#000"/><rect x="354" y="138" width="5" height="1" fill="#000"/><rect x="354" y="134" width="5" height="1" fill="#000"/><rect x="354" y="130" width="5" height="1" fill="#000"/><rect x="826" y="516" width="4" height="1" fill="#000"/><rect x="826" y="510" width="4" height="1" fill="#000"/><rect x="822" y="504" width="8" height="1" fill="#000"/><rect x="826" y="498" width="4" height="1" fill="#000"/><rect x="826" y="492" width="4" height="1" fill="#000"/><rect x="826" y="486" width="4" height="1" fill="#000"/><rect x="826" y="480" width="4" height="1" fill="#000"/><rect x="822" y="474" width="8" height="1" fill="#000"/><rect x="826" y="468" width="4" height="1" fill="#000"/><rect x="826" y="462" width="4" height="1" fill="#000"/><rect x="826" y="456" width="4" height="1" fill="#000"/><rect x="826" y="450" width="4" height="1" fill="#000"/><rect x="822" y="444" width="8" height="1" fill="#000"/><rect x="826" y="438" width="4" height="1" fill="#000"/><rect x="826" y="432" width="4" height="1" fill="#000"/><rect x="826" y="426" width="4" height="1" fill="#000"/><rect x="826" y="419" width="4" height="1" fill="#000"/><rect x="822" y="413" width="8" height="1" fill="#000"/><rect x="826" y="407" width="4" height="1" fill="#000"/><rect x="826" y="401" width="4" height="1" fill="#000"/><rect x="826" y="395" width="4" height="1" fill="#000"/><rect x="826" y="389" width="4" height="1" fill="#000"/><rect x="822" y="383" width="8" height="1" fill="#000"/><rect x="826" y="377" width="4" height="1" fill="#000"/><rect x="826" y="371" width="4" height="1" fill="#000"/><rect x="826" y="365" width="4" height="1" fill="#000"/><rect x="826" y="359" width="4" height="1" fill="#000"/><rect x="822" y="353" width="8" height="1" fill="#000"/><rect x="826" y="347" width="4" height="1" fill="#000"/><rect x="826" y="341" width="4" height="1" fill="#000"/><rect x="826" y="335" width="4" height="1" fill="#000"/><rect x="826" y="329" width="4" height="1" fill="#000"/><rect x="822" y="323" width="8" height="1" fill="#000"/><rect x="826" y="317" width="4" height="1" fill="#000"/><rect x="826" y="311" width="4" height="1" fill="#000"/><rect x="826" y="305" width="4" height="1" fill="#000"/><rect x="826" y="299" width="4" height="1" fill="#000"/><rect x="822" y="293" width="8" height="1" fill="#000"/><rect x="826" y="287" width="4" height="1" fill="#000"/><rect x="826" y="281" width="4" height="1" fill="#000"/><rect x="826" y="275" width="4" height="1" fill="#000"/><rect x="826" y="269" width="4" height="1" fill="#000"/><rect x="822" y="262" width="8" height="1" fill="#000"/><rect x="826" y="256" width="4" height="1" fill="#000"/><rect x="826" y="250" width="4" height="1" fill="#000"/><rect x="826" y="244" width="4" height="1" fill="#000"/><rect x="826" y="238" width="4" height="1" fill="#000"/><rect x="822" y="232" width="8" height="1" fill="#000"/><rect x="826" y="226" width="4" height="1" fill="#000"/><rect x="826" y="220" width="4" height="1" fill="#000"/><rect x="826" y="214" width="4" height="1" fill="#000"/><rect x="826" y="208" width="4" height="1" fill="#000"/><rect x="822" y="202" width="8" height="1" fill="#000"/><rect x="826" y="196" width="4" height="1" fill="#000"/><rect x="826" y="190" width="4" height="1" fill="#000"/><rect x="826" y="184" width="4" height="1" fill="#000"/><rect x="826" y="178" width="4" height="1" fill="#000"/><rect x="822" y="172" width="8" height="1" fill="#000"/><rect x="826" y="166" width="4" height="1" fill="#000"/><rect x="826" y="160" width="4" height="1" fill="#000"/><rect x="826" y="154" width="4" height="1" fill="#000"/><rect x="826" y="148" width="4" height="1" fill="#000"/><rect x="822" y="142" width="8" height="1" fill="#000"/><rect x="826" y="136" width="4" height="1" fill="#000"/><rect x="826" y="130" width="4" height="1" fill="#000"/><rect x="368" y="514" width="1" height="3" fill="#000"/><rect x="381" y="514" width="1" height="3" fill="#000"/><rect x="395" y="514" width="1" height="3" fill="#000"/><rect x="408" y="514" width="1" height="3" fill="#000"/><rect x="422" y="510" width="1" height="7" fill="#000"/><rect x="435" y="514" width="1" height="3" fill="#000"/><rect x="449" y="514" width="1" height="3" fill="#000"/><rect x="462" y="514" width="1" height="3" fill="#000"/><rect x="476" y="514" width="1" height="3" fill="#000"/><rect x="489" y="510" width="1" height="7" fill="#000"/><rect x="503" y="514" width="1" height="3" fill="#000"/><rect x="517" y="514" width="1" height="3" fill="#000"/><rect x="530" y="514" width="1" height="3" fill="#000"/><rect x="544" y="514" width="1" height="3" fill="#000"/><rect x="557" y="510" width="1" height="7" fill="#000"/><rect x="571" y="514" width="1" height="3" fill="#000"/><rect x="584" y="514" width="1" height="3" fill="#000"/><rect x="598" y="514" width="1" height="3" fill="#000"/><rect x="611" y="514" width="1" height="3" fill="#000"/><rect x="625" y="510" width="1" height="7" fill="#000"/><rect x="638" y="514" width="1" height="3" fill="#000"/><rect x="652" y="514" width="1" height="3" fill="#000"/><rect x="665" y="514" width="1" height="3" fill="#000"/><rect x="679" y="514" width="1" height="3" fill="#000"/><rect x="693" y="510" width="1" height="7" fill="#000"/><rect x="706" y="514" width="1" height="3" fill="#000"/><rect x="720" y="514" width="1" height="3" fill="#000"/><rect x="733" y="514" width="1" height="3" fill="#000"/><rect x="747" y="514" width="1" height="3" fill="#000"/><rect x="760" y="510" width="1" height="7" fill="#000"/><rect x="774" y="514" width="1" height="3" fill="#000"/><rect x="787" y="514" width="1" height="3" fill="#000"/><rect x="801" y="514" width="1" height="3" fill="#000"/><rect x="814" y="514" width="1" height="3" fill="#000"/></svg><div class="yl" style="top:495.5px">0</div><div class="yl" style="top:475.8px">5000</div><div class="yl" style="top:456.2px">10000</div><div class="yl" style="top:436.5px">15000</div><div class="yl" style="top:416.8px">20000</div><div class="yl" style="top:397.1px">25000</div><div class="yl" style="top:377.5px">30000</div><div class="yl" style="top:357.8px">35000</div><div class="yl" style="top:338.1px">40000</div><div class="yl" style="top:318.4px">45000</div><div class="yl" style="top:298.8px">50000</div><div class="yl" style="top:279.1px">55000</div><div class="yl" style="top:259.4px">60000</div><div class="yl" style="top:239.8px">65000</div><div class="yl" style="top:220.1px">70000</div><div class="yl" style="top:200.4px">75000</div><div class="yl" style="top:180.7px">80000</div><div class="yl" style="top:161.1px">85000</div><div class="yl" style="top:141.4px">90000</div><div class="yr" style="top:499.5px">-600</div><div class="yr" style="top:469.3px">-500</div><div class="yr" style="top:439.1px">-400</div><div class="yr" style="top:408.9px">-300</div><div class="yr" style="top:378.7px">-200</div><div class="yr" style="top:348.5px">-100</div><div class="yr" style="top:318.4px">0</div><div class="yr" style="top:288.2px">100</div><div class="yr" style="top:258.0px">200</div><div class="yr" style="top:227.8px">300</div><div class="yr" style="top:197.6px">400</div><div class="yr" style="top:167.4px">500</div><div class="yr" style="top:137.2px">600</div><div class="xl" style="left:325.5px">0.0</div><div class="xl" style="left:393.2px">0.5</div><div class="xl" style="left:460.9px">1.0</div><div class="xl" style="left:528.6px">1.5</div><div class="xl" style="left:596.4px">2.0</div><div class="xl" style="left:664.1px">2.5</div><div class="xl" style="left:731.8px">3.0</div><div class="xl" style="left:799.5px">3.5</div>
</body></html>
